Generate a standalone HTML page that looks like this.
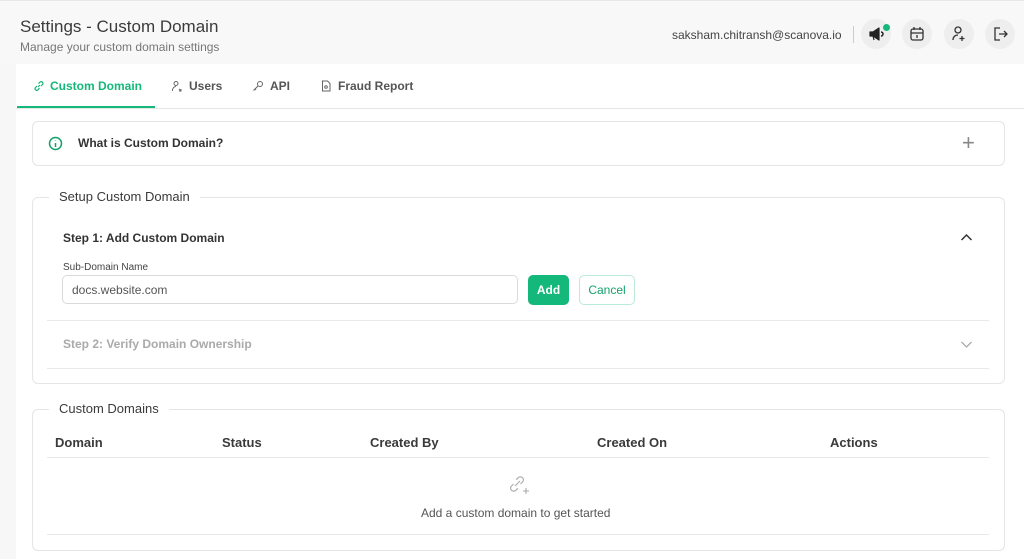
<!DOCTYPE html>
<html><head><meta charset="utf-8"><style>
*{box-sizing:border-box;margin:0;padding:0}
body{width:1024px;height:559px;overflow:hidden;background:#f7f7f8;font-family:"Liberation Sans",sans-serif;color:#333;position:relative}
.abs{position:absolute}
.hdr{left:0;top:0;width:1024px;height:64px;background:#f8f8f8;border-top:1px solid #e6e8ec}
.main{left:16px;top:64px;width:1008px;height:495px;background:#fff}
.box{position:absolute;border:1px solid #e4e5e7;border-radius:6px;background:#fff}
.legend{position:absolute;background:#fff;padding:0 10px;font-size:13px;color:#3a3a3a}
.ic{position:absolute;width:30px;height:30px;border-radius:50%;background:#eeeeee;top:19px}
.th{position:absolute;top:435px;font-size:13px;font-weight:bold;color:#3a3a3a}
</style></head><body>
<div class="abs hdr"></div>
<div class="abs" style="left:20px;top:17px;font-size:17px;color:#3b3b3b">Settings - Custom Domain</div>
<div class="abs" style="left:20px;top:40px;font-size:12px;color:#777">Manage your custom domain settings</div>
<div class="abs" style="left:672px;top:28px;font-size:12px;color:#444">saksham.chitransh@scanova.io</div>
<div class="abs" style="left:853px;top:26px;width:1px;height:17px;background:#ccc"></div>
<div class="ic" style="left:861px"><svg width="30" height="30" viewBox="0 0 30 30"><path d="M9 13h3l6-4v12l-6-4H9z M12 17l1 4" fill="#222" stroke="#222" stroke-width="1.2" stroke-linejoin="round"/><path d="M20 13a2 2 0 010 4" stroke="#222" fill="none" stroke-width="1.5"/></svg></div>
<div class="abs" style="left:883px;top:24px;width:7px;height:7px;border-radius:50%;background:#14b87a"></div>
<div class="ic" style="left:902px"><svg width="30" height="30" viewBox="0 0 30 30" fill="none" stroke="#333" stroke-width="1.3"><rect x="9" y="10" width="12" height="11" rx="2"/><path d="M9 14h12M12 8v3M18 8v3M15 16v3"/></svg></div>
<div class="ic" style="left:944px"><svg width="30" height="30" viewBox="0 0 30 30" fill="none" stroke="#333" stroke-width="1.3"><circle cx="14" cy="11" r="3"/><path d="M9 21c0-3 2-5 5-5M18 17v5M15.5 19.5h5"/></svg></div>
<div class="ic" style="left:985px"><svg width="30" height="30" viewBox="0 0 30 30" fill="none" stroke="#333" stroke-width="1.3"><path d="M15 9h-5v12h5M14 15h8M19 12l3 3-3 3"/></svg></div>
<div class="abs main"></div>
<div class="abs" style="left:16px;top:108px;width:1008px;height:1px;background:#e6e6e6"></div>
<div class="abs" style="left:17px;top:106px;width:138px;height:2px;background:#14b87a"></div>
<svg class="abs" style="left:33px;top:80px" width="12" height="12" viewBox="0 0 12 12" fill="none" stroke="#14b87a" stroke-width="1.2"><path d="M5 7l2-2M4 6L2.5 7.5a1.7 1.7 0 002.4 2.4L6.5 8M8 6l1.5-1.5a1.7 1.7 0 00-2.4-2.4L5.5 3.5"/></svg>
<div class="abs" style="left:50px;top:79px;font-size:12px;font-weight:bold;color:#14b87a">Custom Domain</div>
<svg class="abs" style="left:171px;top:80px" width="12" height="12" viewBox="0 0 12 12" fill="none" stroke="#666" stroke-width="1"><circle cx="5" cy="3.5" r="2"/><path d="M1.5 11c0-3 1.5-4.5 3.5-4.5M8 9l2 2M10 9v2H8"/></svg>
<div class="abs" style="left:189px;top:79px;font-size:12px;font-weight:bold;color:#555">Users</div>
<svg class="abs" style="left:252px;top:80px" width="12" height="12" viewBox="0 0 12 12" fill="none" stroke="#666" stroke-width="1"><circle cx="8" cy="4" r="2.5"/><path d="M6 6l-4.5 4.5M3 9l1 1"/></svg>
<div class="abs" style="left:270px;top:79px;font-size:12px;font-weight:bold;color:#555">API</div>
<svg class="abs" style="left:320px;top:80px" width="12" height="12" viewBox="0 0 12 12" fill="none" stroke="#666" stroke-width="1"><path d="M2.5 1h5l2.5 2.5V11h-7.5z"/><circle cx="6" cy="7" r="1.3"/></svg>
<div class="abs" style="left:338px;top:79px;font-size:12px;font-weight:bold;color:#555">Fraud Report</div>

<div class="box" style="left:32px;top:121px;width:973px;height:45px"></div>
<svg class="abs" style="left:48px;top:136px" width="15" height="15" viewBox="0 0 15 15" fill="none" stroke="#14a06c" stroke-width="1.5"><circle cx="7.5" cy="7.5" r="6"/><path d="M7.5 7v4M7.5 4.3v.4"/></svg>
<div class="abs" style="left:78px;top:136px;font-size:12px;font-weight:bold;color:#333">What is Custom Domain?</div>
<div class="abs" style="left:962px;top:130px;font-size:22px;color:#888;font-weight:300">+</div>

<div class="box" style="left:32px;top:197px;width:973px;height:187px"></div>
<div class="legend" style="left:49px;top:189px">Setup Custom Domain</div>
<div class="abs" style="left:63px;top:231px;font-size:12px;font-weight:bold;color:#333">Step 1: Add Custom Domain</div>
<svg class="abs" style="left:960px;top:233px" width="13" height="9" viewBox="0 0 13 9" fill="none" stroke="#333" stroke-width="1.5"><path d="M1.5 7l5-5 5 5"/></svg>
<div class="abs" style="left:63px;top:262px;font-size:10px;color:#444">Sub-Domain Name</div>
<div class="abs" style="left:62px;top:275px;width:456px;height:29px;border:1px solid #d9dadc;border-radius:5px"></div>
<div class="abs" style="left:72px;top:283px;font-size:12px;color:#555">docs.website.com</div>
<div class="abs" style="left:528px;top:275px;width:41px;height:30px;border-radius:5px;background:#14b87a;color:#fff;font-size:12px;font-weight:bold;text-align:center;line-height:30px">Add</div>
<div class="abs" style="left:579px;top:275px;width:56px;height:30px;border-radius:5px;border:1px solid #b9ebd6;color:#14a06c;font-size:12px;text-align:center;line-height:28px">Cancel</div>
<div class="abs" style="left:47px;top:320px;width:942px;height:1px;background:#e8e8e8"></div>
<div class="abs" style="left:63px;top:337px;font-size:12px;font-weight:bold;color:#aaa">Step 2: Verify Domain Ownership</div>
<svg class="abs" style="left:960px;top:340px" width="13" height="9" viewBox="0 0 13 9" fill="none" stroke="#aaa" stroke-width="1.3"><path d="M1.5 2l5 5 5-5"/></svg>
<div class="abs" style="left:47px;top:368px;width:942px;height:1px;background:#e8e8e8"></div>

<div class="box" style="left:32px;top:409px;width:973px;height:142px"></div>
<div class="legend" style="left:49px;top:401px">Custom Domains</div>
<div class="th" style="left:55px">Domain</div>
<div class="th" style="left:222px">Status</div>
<div class="th" style="left:370px">Created By</div>
<div class="th" style="left:597px">Created On</div>
<div class="th" style="left:830px">Actions</div>
<div class="abs" style="left:47px;top:457px;width:942px;height:1px;background:#e8e8e8"></div>
<svg class="abs" style="left:507px;top:474px" width="24" height="22" viewBox="0 0 24 22" fill="none" stroke="#aaa" stroke-width="1.1"><path d="M8 12l5-5M6.5 10l-2 2a3 3 0 004.3 4.3l2-2M13.5 10l2-2a3 3 0 00-4.3-4.3l-2 2M19 14v6M16 17h6"/></svg>
<div class="abs" style="left:421px;top:506px;font-size:12px;color:#555">Add a custom domain to get started</div>
<div class="abs" style="left:47px;top:534px;width:942px;height:1px;background:#e8e8e8"></div>
</body></html>
